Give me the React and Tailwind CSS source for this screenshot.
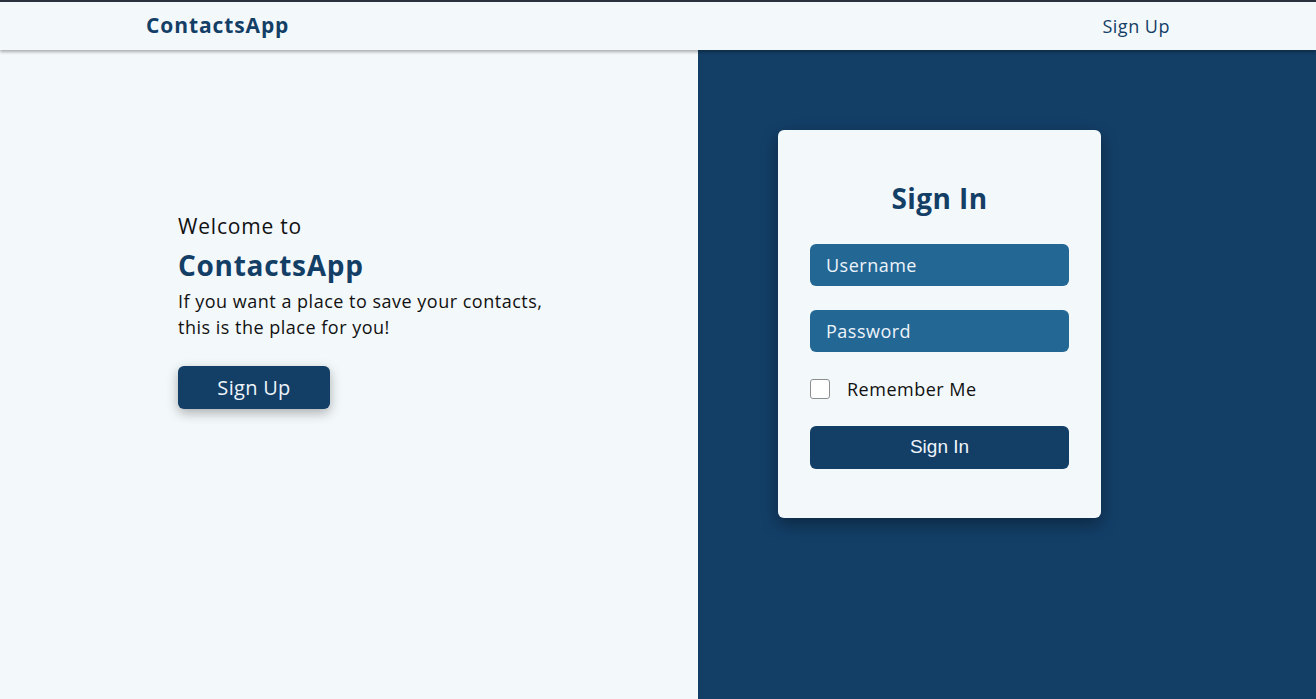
import { useState } from 'react';

const font = { fontFamily: '"Open Sans", "Noto Sans", sans-serif' };

export default function App() {
  const [remember, setRemember] = useState(false);

  return (
    <div className="min-h-screen flex flex-col bg-[#f3f8fb]" style={font}>
      <nav className="h-[50px] border-t-2 border-[#2b313d] bg-[#f3f8fb] shadow-[0_2px_3px_rgba(0,0,0,0.3)] relative z-10">
        <div className="max-w-[1024px] mx-auto h-full flex items-center justify-between">
          <span className="text-[21px] font-bold text-[#133e66] tracking-[0.9px]">ContactsApp</span>
          <span className="text-[18px] text-[#133e66] tracking-[0.5px]">Sign Up</span>
        </div>
      </nav>

      <div className="flex flex-1 h-[649px]">
        <div className="w-[698px] pl-[178px] pt-[162px]">
          <p className="text-[21px] text-[#111] leading-[28px] tracking-[0.8px]">Welcome to</p>
          <h1 className="text-[28px] font-bold text-[#133e66] leading-[36px] mt-[7px] tracking-[0.7px]">ContactsApp</h1>
          <p className="text-[18px] text-[#111] leading-[26px] mt-[5px] tracking-[0.5px]">
            If you want a place to save your contacts,<br />this is the place for you!
          </p>
          <button className="mt-[26px] w-[152px] h-[43px] rounded-[6px] bg-[#133e66] text-[#eef4fa] text-[20px] tracking-[0.3px] shadow-[0_4px_12px_rgba(0,0,0,0.3)]">
            Sign Up
          </button>
        </div>

        <div className="flex-1 bg-[#133e66] pl-[80px] pt-[80px]">
          <div className="w-[323px] h-[388px] rounded-[6px] bg-[#f3f8fb] shadow-[0_6px_16px_rgba(0,0,0,0.35)] px-[32px] pt-[50px]">
            <h2 className="text-center text-[28px] font-bold text-[#133e66] leading-[36px] tracking-[0.4px]">Sign In</h2>
            <input
              placeholder="Username"
              className="mt-[28px] w-full h-[42px] rounded-[6px] bg-[#236795] px-[16px] text-[18px] tracking-[0.5px] text-white placeholder:text-[#eef4fa] outline-none"
            />
            <input
              type="password"
              placeholder="Password"
              className="mt-[24px] w-full h-[42px] rounded-[6px] bg-[#236795] px-[16px] text-[18px] tracking-[0.5px] text-white placeholder:text-[#eef4fa] outline-none"
            />
            <label className="mt-[27px] h-[20px] flex items-center gap-[17px] cursor-pointer">
              <input
                type="checkbox"
                checked={remember}
                onChange={e => setRemember(e.target.checked)}
                className="w-[20px] h-[20px] m-0 appearance-none rounded-[3px] border border-[#8d8d8d] bg-white checked:bg-[#236795]"
              />
              <span className="text-[18px] leading-[20px] tracking-[0.5px] text-[#111]">Remember Me</span>
            </label>
            <button
              className="mt-[27px] w-full h-[43px] rounded-[6px] bg-[#133e66] text-[#eef4fa] text-[19px]"
              style={{ fontFamily: '"Liberation Sans", Arial, sans-serif' }}
            >
              Sign In
            </button>
          </div>
        </div>
      </div>
    </div>
  );
}
